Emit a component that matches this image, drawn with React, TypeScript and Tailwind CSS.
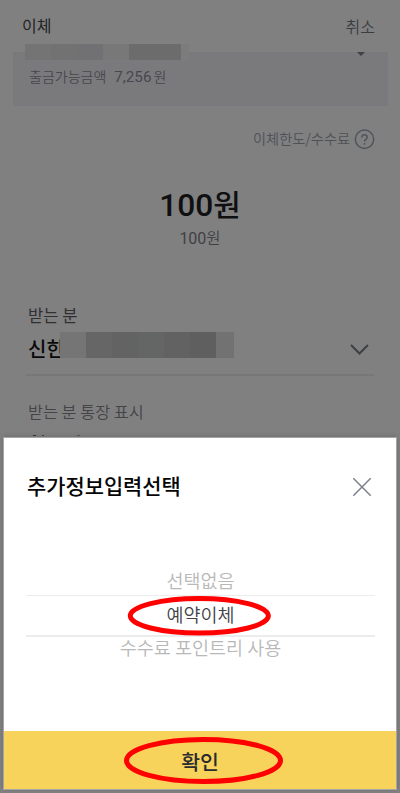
import React from "react";

const ACCOUNT_MASK = ["bg-[#747474]", "bg-[#727272]", "bg-[#717174]", "bg-[#787878]", "bg-[#6c6c6c]", "bg-[#6c6c6c]", "bg-[#7c7c7c]"];
const RECIPIENT_MASK = ["bg-[#757575]", "bg-[#666666]", "bg-[#636363]", "bg-[#646666]", "bg-[#626262]", "bg-[#5f5f5f]", "bg-[#727272]"];

function Header() {
  return (
    <header className="flex h-[44px] items-center justify-between pt-[6px] pr-[25px] pl-[22px] text-[16px]">
      <h1 className="font-normal text-[#242427]">이체</h1>
      <button className="pt-[1px] font-[350] text-[#3c3d42]">취소</button>
    </header>
  );
}

function AccountPanel() {
  return (
    <section className="relative mr-[12px] ml-[13px] mt-[8px] h-[54px] border border-t-0 border-[#78797c] bg-[#7a7a7d]">
      <div className="absolute top-[-8px] left-[11px] flex h-[16px]">
        {ACCOUNT_MASK.map((c, i) => (
          <span key={i} className={`w-[26px] last:w-[8px] ${c}`} />
        ))}
      </div>
      <span className="absolute top-0 right-[22px] border-x-[4px] border-t-[4.5px] border-x-transparent border-t-[#3e4146]" />
      <p className="flex items-baseline pt-[14px] pl-[15px] text-[14px] leading-[20px] font-[350] text-[#48484c]">
        <span>출금가능금액</span>
        <span className="ml-[8px] font-['Roboto'] text-[15.2px] font-normal">7,256</span>
        <span className="ml-[2px]">원</span>
      </p>
    </section>
  );
}

function LimitLink() {
  return (
    <div className="mt-[22px] flex h-[22px] items-center justify-end gap-[4px] pr-[25px]">
      <span className="text-[14.2px] font-[350] text-[#4e5158]">이체한도/수수료</span>
      <svg width="21" height="21" viewBox="0 0 21 21" fill="none" stroke="#50555d" strokeWidth="1.5">
        <circle cx="10.5" cy="10.3" r="9.2" />
        <path d="M7.8 8.5c0-3.8 5.4-3.6 5.4-.2 0 2.1-2.7 2-2.7 4.3" />
        <path d="M10.5 14v1.7" />
      </svg>
    </div>
  );
}

function Amount() {
  return (
    <section className="mt-[33px] flex flex-col items-center">
      <p className="flex h-[40px] items-baseline leading-[40px] font-medium text-[#101012]">
        <span className="font-['Roboto'] text-[31.7px]">100</span>
        <span className="text-[30px]">원</span>
      </p>
      <p className="mt-[4px] flex h-[20px] items-baseline leading-[20px] font-[350] text-[#3f4044]">
        <span className="font-['Roboto'] text-[16px] font-normal">100</span>
        <span className="text-[15.5px]">원</span>
      </p>
    </section>
  );
}

function Recipient() {
  return (
    <section className="mx-[26px] mt-[57px] h-[72px] border-b-2 border-[#777777] pl-[2px]">
      <p className="h-[22px] text-[16.6px] leading-[22px] text-[#303033]">받는 분</p>
      <div className="relative mt-[6px] flex h-[26px]">
        <span className="mt-[3px] text-[20px] leading-[28px] font-medium whitespace-nowrap text-[#09090a]">신한</span>
        <div className="absolute top-0 left-[32px] flex h-[26px]">
          {RECIPIENT_MASK.map((c, i) => (
            <span key={i} className={`w-[26px] shrink-0 last:w-[18px] ${c}`} />
          ))}
        </div>
        <span className="absolute top-[26px] left-[32px] h-[4px] w-[6px] bg-[#808080]" />
        <svg className="mt-[11px] mr-[5px] ml-auto" width="19" height="13" viewBox="0 0 19 13" fill="none" stroke="#3d4045" strokeWidth="2">
          <path d="M1 2l8.5 8.5L18 2" />
        </svg>
      </div>
    </section>
  );
}

function OptionSheet() {
  return (
    <section role="dialog" className="absolute top-[437px] left-[3px] h-[353px] w-[394px] border border-[#a5a5a5] bg-white shadow-[0_-1px_5px_rgba(0,0,0,0.14)]">
      <div className="flex h-[98px] items-center justify-between pr-[24px] pl-[23px]">
        <h2 className="-mt-[2px] text-[20.9px] font-medium text-[#050506]">추가정보입력선택</h2>
        <svg width="20" height="20" viewBox="0 0 20 20" fill="none" stroke="#7b818c" strokeWidth="1.5">
          <path d="M1.3 1.3l17.4 17.4M18.7 1.3L1.3 18.7" />
        </svg>
      </div>
      <ul className="mr-[21px] ml-[22px] mt-[29px] text-center text-[18.5px] font-[350]">
        <li className="h-[30px] leading-[30px] text-[#b8b8b8]">선택없음</li>
        <li className="relative h-[42px] border-t border-b-2 border-[#ececec] leading-[36px] text-[#434347]">
          예약이체
          <svg className="absolute top-0 left-[87px]" width="172" height="41" viewBox="0 0 172 41" fill="none" stroke="#ff0000" strokeWidth="5">
            <ellipse cx="86.3" cy="19.8" rx="69" ry="17.2" />
          </svg>
        </li>
        <li className="h-[26px] leading-[21px] text-[#b8b8b8]">수수료 포인트리 사용</li>
      </ul>
      <button className="absolute bottom-0 left-0 flex h-[58px] w-full items-center justify-center bg-[#f7d35b] pt-[3px] text-[20.5px] font-medium text-[#292b30]">
        확인
        <svg className="absolute top-[5px] left-[118px]" width="164" height="50" viewBox="0 0 164 50" fill="none" stroke="#ff0000" strokeWidth="5">
          <ellipse cx="81.5" cy="24.5" rx="77" ry="21" />
        </svg>
      </button>
    </section>
  );
}

export default function App() {
  return (
    <main className="relative h-[793px] w-[400px] overflow-hidden bg-[#808080] font-['Noto_Sans_CJK_KR','Noto_Sans',sans-serif]">
      <Header />
      <AccountPanel />
      <LimitLink />
      <Amount />
      <Recipient />
      <section className="mt-[24px] h-[37px] overflow-hidden pl-[28px]">
        <p className="h-[22px] text-[16.3px] leading-[22px] font-[350] text-[#444448]">받는 분 통장 표시</p>
        <div className="mt-[13px] flex items-start gap-[6px] pl-[5px]">
          <span className="h-[1px] w-[3px] bg-[#38383a]" />
          <span className="h-[1px] w-[2px] bg-[#4a4a4c]" />
          <span className="ml-[27px] h-[1px] w-[3px] bg-[#5a5a5c]" />
        </div>
      </section>
      <OptionSheet />
    </main>
  );
}
